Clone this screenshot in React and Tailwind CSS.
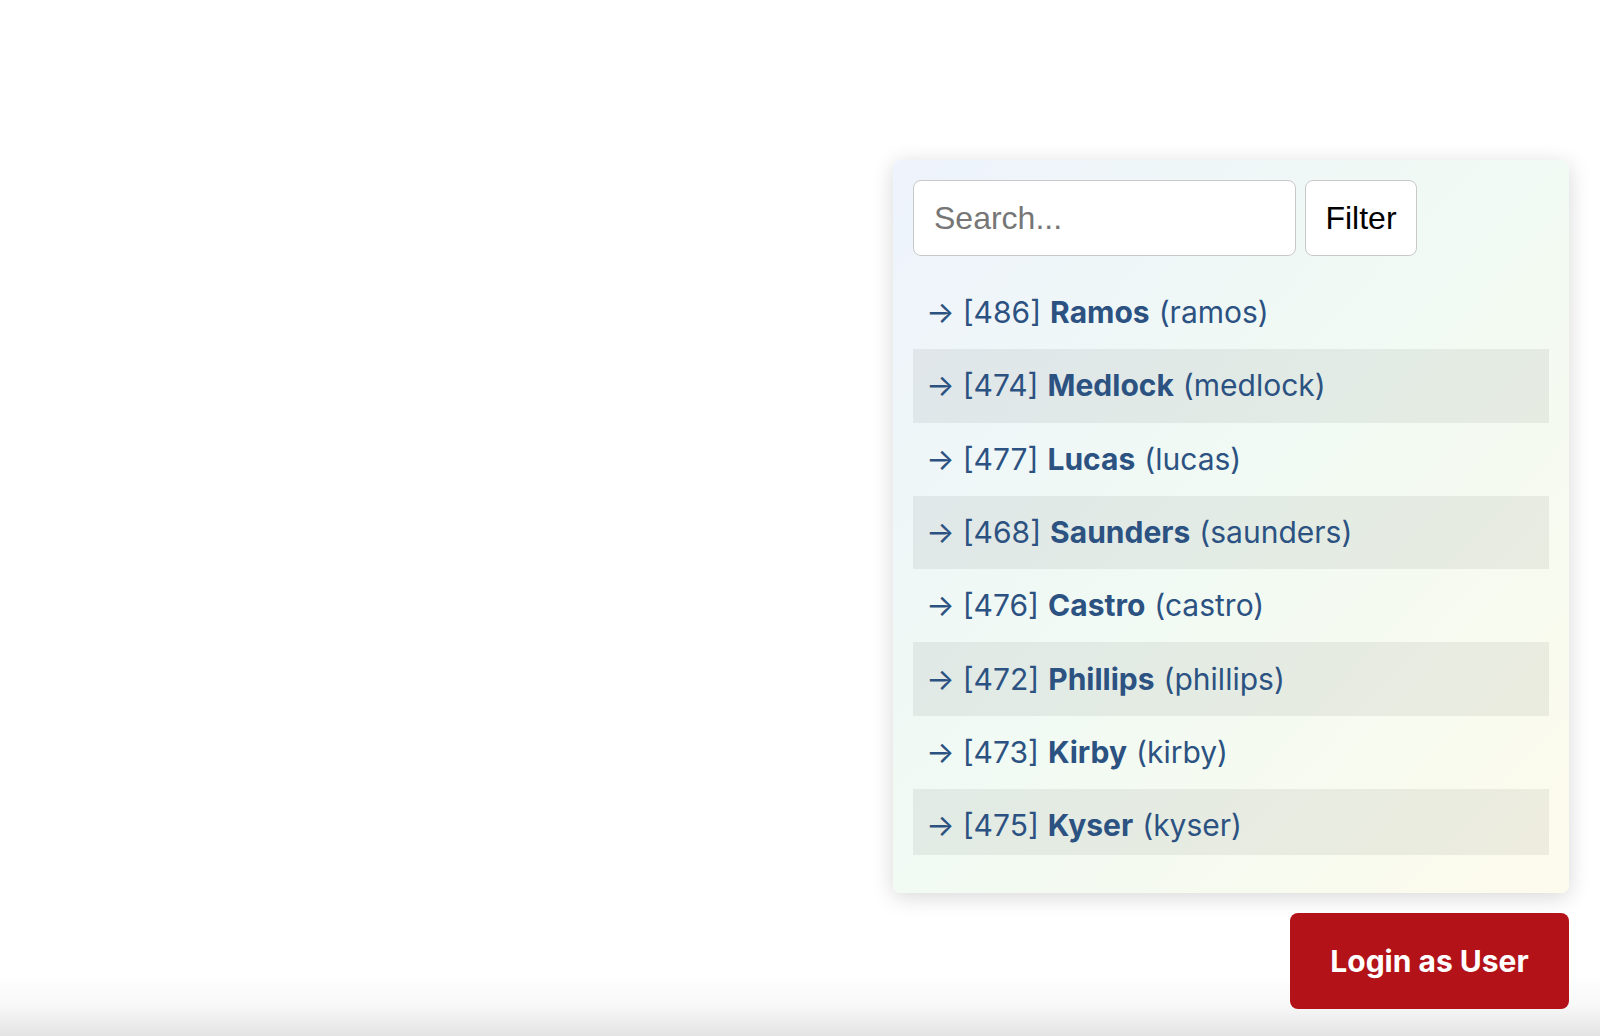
import { useState } from 'react'

const users = [
	{ id: 486, name: 'Ramos', login: 'ramos' },
	{ id: 474, name: 'Medlock', login: 'medlock' },
	{ id: 477, name: 'Lucas', login: 'lucas' },
	{ id: 468, name: 'Saunders', login: 'saunders' },
	{ id: 476, name: 'Castro', login: 'castro' },
	{ id: 472, name: 'Phillips', login: 'phillips' },
	{ id: 473, name: 'Kirby', login: 'kirby' },
	{ id: 475, name: 'Kyser', login: 'kyser' },
]

const UserRow = ({ user, striped }) => (
	<li
		className={`flex h-[73.3px] shrink-0 items-center pl-[13px] pr-4 font-['Inter',sans-serif] text-[30px] text-[#2c5282] ${
			striped ? 'bg-black/[0.06]' : ''
		}`}
	>
		<span className="mr-[8px]">→</span>
		<span>[{user.id}]</span>
		<span className="ml-[9px] font-bold">{user.name}</span>
		<span className="ml-[9px]">({user.login})</span>
	</li>
)

const App = () => {
	const [query, setQuery] = useState('')

	return (
		<div className="flex h-[1036px] w-full flex-col items-end bg-[linear-gradient(to_bottom,#ffffff_0%,#ffffff_94%,#f8f8f8_97%,#e4e4e4_100%)] pr-[31px] pt-[160px]">
			<div className="flex w-[676px] flex-col rounded-lg bg-gradient-to-br from-[#eef3fc] via-[#f1faf3] to-[#fdfbec] px-5 pb-[38px] pt-5 shadow-[0_4px_22px_rgba(0,0,0,0.16)]">
				<div className="flex gap-[9px]">
					<input
						type="text"
						value={query}
						onChange={(event) => setQuery(event.target.value)}
						placeholder="Search..."
						className="h-[76px] w-[383px] rounded-lg border-[1.5px] border-[#c9c9c9] bg-white px-5 font-['Liberation_Sans',Arial,sans-serif] text-[32px] text-black placeholder:text-[#767676] focus:outline-none"
					/>
					<button
						type="button"
						className="h-[76px] w-[112px] rounded-lg border-[1.5px] border-[#c9c9c9] bg-white font-['Liberation_Sans',Arial,sans-serif] text-[32px] text-black"
					>
						Filter
					</button>
				</div>

				<ul className="mt-5 flex h-[579px] flex-col overflow-hidden">
					{users.map((user, i) => (
						<UserRow key={user.id} user={user} striped={i % 2 === 1} />
					))}
				</ul>
			</div>

			<button
				type="button"
				className="mt-5 h-[96px] w-[279px] rounded-lg bg-[#b31318] font-['Inter',sans-serif] text-[30px] font-bold text-white"
			>
				Login as User
			</button>
		</div>
	)
}

export default App
